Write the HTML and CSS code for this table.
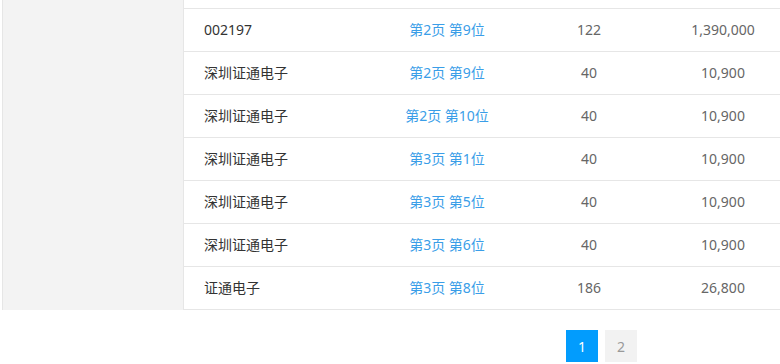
FILE: index.html
```html
<!DOCTYPE html>
<html lang="zh-CN">
<head>
<meta charset="utf-8">
<title>排名</title>
<link rel="stylesheet" href="styles.css">
</head>
<body>
<div class="wrap">
  <aside class="side"></aside>
  <div class="table">
    <div class="row stub"><div></div><div></div><div></div><div></div></div>
    <div class="row"><div class="name">002197</div><div class="pos">第2页 第9位</div><div class="num">122</div><div class="num">1,390,000</div></div>
    <div class="row"><div class="name">深圳证通电子</div><div class="pos">第2页 第9位</div><div class="num">40</div><div class="num">10,900</div></div>
    <div class="row"><div class="name">深圳证通电子</div><div class="pos">第2页 第10位</div><div class="num">40</div><div class="num">10,900</div></div>
    <div class="row"><div class="name">深圳证通电子</div><div class="pos">第3页 第1位</div><div class="num">40</div><div class="num">10,900</div></div>
    <div class="row"><div class="name">深圳证通电子</div><div class="pos">第3页 第5位</div><div class="num">40</div><div class="num">10,900</div></div>
    <div class="row"><div class="name">深圳证通电子</div><div class="pos">第3页 第6位</div><div class="num">40</div><div class="num">10,900</div></div>
    <div class="row"><div class="name">证通电子</div><div class="pos">第3页 第8位</div><div class="num">186</div><div class="num">26,800</div></div>
  </div>
</div>
<nav class="pager">
  <a class="page active">1</a>
  <a class="page">2</a>
</nav>
</body>
</html>
```
FILE: styles.css
```css
html, body {
  margin: 0;
  padding: 0;
  overflow: hidden;
  background: #fff;
  font-family: "Noto Sans", "Noto Sans CJK SC", sans-serif;
  font-size: 14px;
}
.wrap {
  display: flex;
  width: max-content;
  margin-left: 2px;
  border-left: 1px solid #e6e6e6;
}
.side {
  width: 180px;
  background: #f3f3f3;
  border-right: 1px solid #e6e6e6;
}
.table {
  display: flex;
  flex-direction: column;
}
.row {
  display: grid;
  grid-template-columns: 193px 140px 144px 124px;
  height: 40px;
  padding-bottom: 2px;
  align-items: center;
  border-bottom: 1px solid #e6e6e6;
}
.row.stub {
  height: 8px;
  padding-bottom: 0;
}
.name {
  padding-left: 20px;
  color: #333;
}
.pos {
  text-align: center;
  color: #3a9ee8;
}
.num {
  text-align: center;
  color: #666;
}
.pager {
  display: flex;
  gap: 7px;
  margin: 20px 0 0 566px;
}
.page {
  width: 32px;
  height: 32px;
  display: flex;
  align-items: center;
  justify-content: center;
  background: #f2f2f2;
  color: #999;
  font-size: 14px;
}
.page.active {
  background: #029cfd;
  color: #fff;
}
```
